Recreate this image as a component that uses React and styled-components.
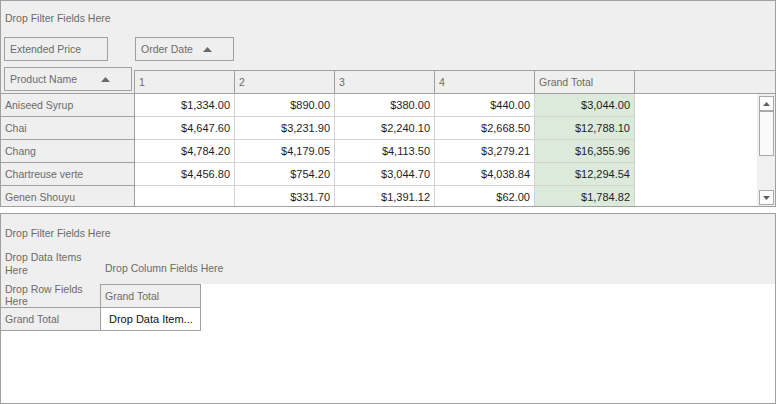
import React from 'react';
import styled, { createGlobalStyle } from 'styled-components';

const BORDER = '#a0a0a0';
const GRID = '#d2d2d2';
const BG = '#efefef';
const MUTED = '#6b6b6b';
const INK = '#1e1e1e';
const TOTAL = '#dbeadb';

const Global = createGlobalStyle`
  html, body { margin: 0; padding: 0; background: #fff; }
  body { font-family: "Liberation Sans", Arial, sans-serif; font-size: 11px; }
  * { box-sizing: border-box; }
`;

const Page = styled.div`
  width: 776px;
  height: 404px;
  display: flex;
  flex-direction: column;
  gap: 6px;
  background: #fff;
`;

const Panel = styled.div`
  border: 1px solid ${BORDER};
  background: ${(p) => p.$bg};
  height: ${(p) => p.$h}px;
  flex-shrink: 0;
  display: flex;
  flex-direction: column;
  overflow: hidden;
  color: ${MUTED};
  font-size: 10.5px;
  line-height: 13px;
`;

const FilterBar = styled.div`
  height: ${(p) => p.$h}px;
  padding: ${(p) => p.$pt || 0}px 0 0 4px;
  display: flex;
  align-items: center;
  flex-shrink: 0;
`;

const FieldRow = styled.div`
  height: 30px;
  display: flex;
  align-items: flex-start;
  padding-top: 1px;
  flex-shrink: 0;
`;

const FieldSlot = styled.div`
  width: ${(p) => p.$w}px;
  padding-left: ${(p) => p.$pl}px;
  flex-shrink: 0;
`;

const FieldBox = styled.div`
  width: ${(p) => p.$w}px;
  height: 24px;
  border: 1px solid ${BORDER};
  padding: 0 21px 0 5px;
  display: flex;
  align-items: center;
  justify-content: space-between;
  white-space: nowrap;
`;

const SortArrow = () => (
  <svg width="9" height="5" viewBox="0 0 9 5">
    <path d="M4.5 0 L9 5 L0 5 Z" fill="#6a6a6a" />
  </svg>
);

const PivotHead = styled.div`
  height: 28px;
  display: flex;
  align-items: flex-end;
  flex-shrink: 0;
`;

const RowAreaHead = styled.div`
  width: 133px;
  height: 28px;
  border-bottom: 1px solid ${BORDER};
  padding: 1px 0 0 3px;
  flex-shrink: 0;
`;

const ColHeadCell = styled.div`
  width: ${(p) => (p.$first ? 101 : 100)}px;
  height: 24px;
  border-top: 1px solid ${BORDER};
  border-bottom: 1px solid ${BORDER};
  border-right: 1px solid ${BORDER};
  border-left: ${(p) => (p.$first ? `1px solid ${BORDER}` : 'none')};
  padding-left: 4px;
  display: flex;
  align-items: center;
  flex-shrink: 0;
`;

const HeadFiller = styled.div`
  flex: 1;
  height: 24px;
  border-top: 1px solid ${BORDER};
  border-bottom: 1px solid ${BORDER};
`;

const Body = styled.div`
  flex: 1;
  display: flex;
  overflow: hidden;
`;

const Rows = styled.div`
  flex: 1;
  background: #fff;
  display: flex;
  flex-direction: column;
`;

const Row = styled.div`
  height: 23px;
  display: flex;
  flex-shrink: 0;
`;

const RowHeadCell = styled.div`
  width: ${(p) => p.$w}px;
  height: ${(p) => p.$h || 23}px;
  background: ${BG};
  border-right: 1px solid ${BORDER};
  border-bottom: 1px solid ${BORDER};
  border-top: ${(p) => (p.$top ? `1px solid ${BORDER}` : 'none')};
  padding-left: 4px;
  display: flex;
  align-items: center;
  color: ${MUTED};
  flex-shrink: 0;
`;

const DataCell = styled.div`
  width: 100px;
  height: 23px;
  background: ${(p) => (p.$total ? TOTAL : '#fff')};
  border-right: 1px solid ${GRID};
  border-bottom: 1px solid ${GRID};
  padding-right: 4px;
  display: flex;
  align-items: center;
  justify-content: flex-end;
  color: ${INK};
  font-size: 11px;
  flex-shrink: 0;
`;

const ScrollTrack = styled.div`
  width: 18px;
  background: #f0f0f0;
  padding: 2px 1px 1px 2px;
  display: flex;
  flex-direction: column;
  flex-shrink: 0;
`;

const ScrollBtn = styled.div`
  height: 15px;
  border: 1px solid #a9a9a9;
  background: #fdfdfd;
  display: flex;
  align-items: center;
  justify-content: center;
  flex-shrink: 0;
`;

const Thumb = styled.div`
  height: 45px;
  border: 1px solid #a9a9a9;
  background: #fafafa;
  flex-shrink: 0;
`;

const Spacer = styled.div`
  flex: 1;
`;

const TinyArrow = ({ down }) => (
  <svg width="7" height="4" viewBox="0 0 7 4">
    <path d={down ? 'M0 0 L7 0 L3.5 4 Z' : 'M3.5 0 L7 4 L0 4 Z'} fill="#5f5f5f" />
  </svg>
);

/* bottom panel */
const GrayTop = styled.div`
  background: ${BG};
  flex-shrink: 0;
`;

const AreaRow = styled.div`
  height: 34px;
  display: flex;
`;

const DataItemsArea = styled.div`
  width: 99px;
  padding: 1px 4px 0 4px;
  flex-shrink: 0;
`;

const ColumnArea = styled.div`
  flex: 1;
  padding: 2px 0 0 5px;
  display: flex;
  align-items: center;
`;

const MiniRow = styled.div`
  display: flex;
  flex-shrink: 0;
`;

const RowFieldsArea = styled.div`
  width: 99px;
  height: 23px;
  background: ${BG};
  padding: 0 0 2px 4px;
  line-height: 12px;
  display: flex;
  align-items: center;
  flex-shrink: 0;
`;

const TotalHeader = styled.div`
  width: 101px;
  height: 23px;
  background: ${BG};
  border: 1px solid ${BORDER};
  border-bottom: none;
  padding-left: 4px;
  display: flex;
  align-items: center;
  flex-shrink: 0;
`;

const DropDataCell = styled.div`
  width: 100px;
  height: 24px;
  background: #fff;
  border-top: 1px solid ${BORDER};
  border-right: 1px solid ${BORDER};
  border-bottom: 1px solid ${BORDER};
  padding-left: 8px;
  display: flex;
  align-items: center;
  color: #111;
  font-size: 11px;
  white-space: nowrap;
  flex-shrink: 0;
`;

const data = [
  ['Aniseed Syrup', '$1,334.00', '$890.00', '$380.00', '$440.00', '$3,044.00'],
  ['Chai', '$4,647.60', '$3,231.90', '$2,240.10', '$2,668.50', '$12,788.10'],
  ['Chang', '$4,784.20', '$4,179.05', '$4,113.50', '$3,279.21', '$16,355.96'],
  ['Chartreuse verte', '$4,456.80', '$754.20', '$3,044.70', '$4,038.84', '$12,294.54'],
  ['Genen Shouyu', '', '$331.70', '$1,391.12', '$62.00', '$1,784.82'],
];

export default function App() {
  return (
    <Page>
      <Global />
      <Panel $h={207} $bg={BG}>
        <FilterBar $h={35}>Drop Filter Fields Here</FilterBar>
        <FieldRow>
          <FieldSlot $w={134} $pl={3}>
            <FieldBox $w={104}>Extended Price</FieldBox>
          </FieldSlot>
          <FieldSlot $w={120} $pl={0}>
            <FieldBox $w={99}>
              Order Date <SortArrow />
            </FieldBox>
          </FieldSlot>
        </FieldRow>
        <PivotHead>
          <RowAreaHead>
            <FieldBox $w={128}>
              Product Name <SortArrow />
            </FieldBox>
          </RowAreaHead>
          <ColHeadCell $first>1</ColHeadCell>
          <ColHeadCell>2</ColHeadCell>
          <ColHeadCell>3</ColHeadCell>
          <ColHeadCell>4</ColHeadCell>
          <ColHeadCell>Grand Total</ColHeadCell>
          <HeadFiller />
        </PivotHead>
        <Body>
          <Rows>
            {data.map((r) => (
              <Row key={r[0]}>
                <RowHeadCell $w={134}>{r[0]}</RowHeadCell>
                {r.slice(1).map((v, i) => (
                  <DataCell key={i} $total={i === 4}>
                    {v}
                  </DataCell>
                ))}
              </Row>
            ))}
          </Rows>
          <ScrollTrack>
            <ScrollBtn>
              <TinyArrow />
            </ScrollBtn>
            <Thumb />
            <Spacer />
            <ScrollBtn>
              <TinyArrow down />
            </ScrollBtn>
          </ScrollTrack>
        </Body>
      </Panel>

      <Panel $h={191} $bg="#fff">
        <GrayTop>
          <FilterBar $h={36} $pt={2}>Drop Filter Fields Here</FilterBar>
          <AreaRow>
            <DataItemsArea>
              Drop Data Items
              <br />
              Here
            </DataItemsArea>
            <ColumnArea>Drop Column Fields Here</ColumnArea>
          </AreaRow>
        </GrayTop>
        <MiniRow>
          <RowFieldsArea>
            <span>
              Drop Row Fields
              <br />
              Here
            </span>
          </RowFieldsArea>
          <TotalHeader>Grand Total</TotalHeader>
        </MiniRow>
        <MiniRow>
          <RowHeadCell $w={100} $h={24} $top>
            Grand Total
          </RowHeadCell>
          <DropDataCell>Drop Data Item...</DropDataCell>
        </MiniRow>
      </Panel>
    </Page>
  );
}
